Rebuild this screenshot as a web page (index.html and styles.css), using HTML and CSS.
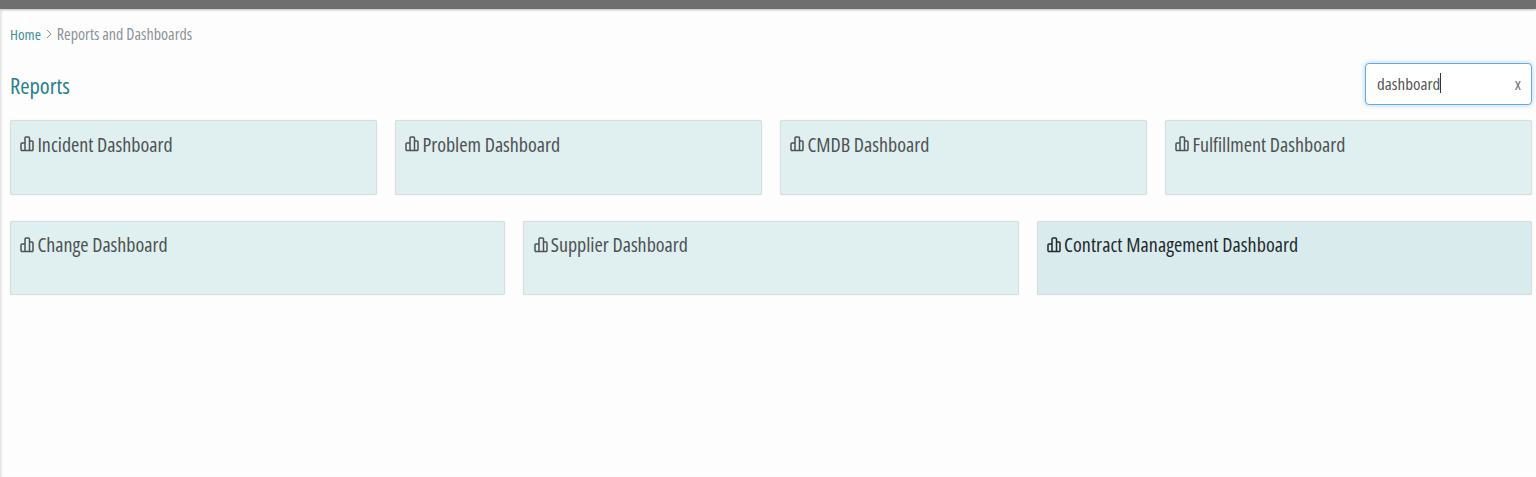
FILE: index.html
```html
<!DOCTYPE html>
<html lang="en">
<head>
    <meta charset="UTF-8">
    <title>Reports</title>
    <link rel="stylesheet" href="styles.css">
</head>
<body>
    <div class="topbar"></div>
    <main class="page">
        <nav class="breadcrumb">
            <a class="crumb-link">Home</a>
            <svg class="crumb-sep" viewBox="0 0 6 10" width="6" height="10"><path d="M1 1l4 4-4 4" fill="none" stroke="#8a9499" stroke-width="1"/></svg>
            <span>Reports and Dashboards</span>
        </nav>

        <div class="title-row">
            <h1>Reports</h1>
            <div class="search">
                <span class="search-text">dashboard</span><span class="caret"></span>
                <span class="clear">x</span>
            </div>
        </div>

        <!-- Dashboards -->
        <div class="cards">
            <a class="card"><svg class="icon" viewBox="0 0 14 16" width="14" height="16"><path d="M1 14.500V8q0-1 1-1h3M5 14.500V2q0-1 1-1h2.500q1 0 1 1v12.500M9.500 5H12q1 0 1 1v8.500M1 14.500h12" fill="none" stroke="currentColor" stroke-width="1.500"/></svg><span>Incident Dashboard</span></a>
            <a class="card"><svg class="icon" viewBox="0 0 14 16" width="14" height="16"><path d="M1 14.500V8q0-1 1-1h3M5 14.500V2q0-1 1-1h2.500q1 0 1 1v12.500M9.500 5H12q1 0 1 1v8.500M1 14.500h12" fill="none" stroke="currentColor" stroke-width="1.500"/></svg><span>Problem Dashboard</span></a>
            <a class="card"><svg class="icon" viewBox="0 0 14 16" width="14" height="16"><path d="M1 14.500V8q0-1 1-1h3M5 14.500V2q0-1 1-1h2.500q1 0 1 1v12.500M9.500 5H12q1 0 1 1v8.500M1 14.500h12" fill="none" stroke="currentColor" stroke-width="1.500"/></svg><span>CMDB Dashboard</span></a>
            <a class="card"><svg class="icon" viewBox="0 0 14 16" width="14" height="16"><path d="M1 14.500V8q0-1 1-1h3M5 14.500V2q0-1 1-1h2.500q1 0 1 1v12.500M9.500 5H12q1 0 1 1v8.500M1 14.500h12" fill="none" stroke="currentColor" stroke-width="1.500"/></svg><span>Fulfillment Dashboard</span></a>
        </div>
        <div class="cards">
            <a class="card"><svg class="icon" viewBox="0 0 14 16" width="14" height="16"><path d="M1 14.500V8q0-1 1-1h3M5 14.500V2q0-1 1-1h2.500q1 0 1 1v12.500M9.500 5H12q1 0 1 1v8.500M1 14.500h12" fill="none" stroke="currentColor" stroke-width="1.500"/></svg><span>Change Dashboard</span></a>
            <a class="card"><svg class="icon" viewBox="0 0 14 16" width="14" height="16"><path d="M1 14.500V8q0-1 1-1h3M5 14.500V2q0-1 1-1h2.500q1 0 1 1v12.500M9.500 5H12q1 0 1 1v8.500M1 14.500h12" fill="none" stroke="currentColor" stroke-width="1.500"/></svg><span>Supplier Dashboard</span></a>
            <a class="card hover"><svg class="icon" viewBox="0 0 14 16" width="14" height="16"><path d="M1 14.500V8q0-1 1-1h3M5 14.500V2q0-1 1-1h2.500q1 0 1 1v12.500M9.500 5H12q1 0 1 1v8.500M1 14.500h12" fill="none" stroke="currentColor" stroke-width="1.500"/></svg><span>Contract Management Dashboard</span></a>
        </div>
    </main>
</body>
</html>
```

FILE: styles.css
```css
html, body { height: 100%; }
body { margin: 0; background: #fdfdfe; font-family: "Open Sans", sans-serif; font-stretch: 75%; overflow: hidden; box-shadow: inset 3px 0 3px -2px #d8d8d8; }
.topbar { height: 9px; background: #6f6f6f; box-shadow: 0 1px 2px #bbb; }
.page { padding: 0 4px 0 10px; }
.breadcrumb { display: flex; align-items: center; gap: 5px; height: 20px; margin-top: 15px; font-size: 16px; color: #8b9396; }
.crumb-link { color: #3f8f99; font-size: 15px; }
.title-row { display: flex; justify-content: space-between; align-items: center; height: 42px; margin-top: 19px; margin-bottom: 15px; }
h1 { margin: 0; padding-top: 2px; font-size: 22.5px; font-weight: 400; color: #26808a; }
.search { display: flex; align-items: center; width: 167px; height: 42px; box-sizing: border-box; padding: 0 10px 2px 11px; background: #fff; border: 1px solid #6aa9de; border-radius: 4px; box-shadow: 0 0 5px #a9cfee; font-size: 17px; color: #555; }
.caret { width: 1px; height: 20px; background: #333; }
.clear { margin-left: auto; font-size: 17px; line-height: 1; color: #777; }
.cards { display: flex; gap: 18px; margin-bottom: 26px; }
.card { flex: 1; display: flex; align-items: flex-start; gap: 3px; height: 74.5px; box-sizing: border-box; padding: 10.500px 9.400px; background: #e0efef; border: 1px solid #d8dedd; border-radius: 2px; box-shadow: 0 0 1px #cdd3d2; font-size: 20px; line-height: 26px; color: #4d5354; }
.icon { flex: none; margin-top: 4.500px; }
.hover { background: #daebee; color: #1f2a2e; letter-spacing: 0.07px; }
```
